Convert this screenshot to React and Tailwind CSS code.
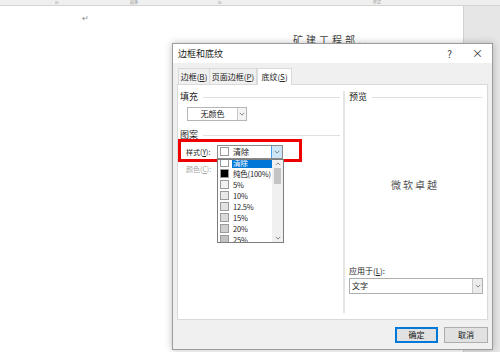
import React from "react";

const font = { fontFamily: '"Noto Sans CJK SC", "Noto Sans", sans-serif' };

const patterns = [
  { label: "清除", swatch: "bg-white", active: true },
  { label: "纯色(100%)", swatch: "bg-black" },
  { label: "5%", swatch: "bg-[#f2f2f2]" },
  { label: "10%", swatch: "bg-[#e8e8e8]" },
  { label: "12.5%", swatch: "bg-[#e2e2e2]" },
  { label: "15%", swatch: "bg-[#dadada]" },
  { label: "20%", swatch: "bg-[#cfcfcf]" },
  { label: "25%", swatch: "bg-[#c2c2c2]" },
];

function Chevron({ up = false, className = "" }) {
  return (
    <svg viewBox="0 0 8 5" className={className} fill="none">
      <path
        d={up ? "M1 4L4 1L7 4" : "M1 1L4 4L7 1"}
        stroke="#606060"
        strokeWidth="1"
      />
    </svg>
  );
}

function GroupHeading({ children }) {
  return (
    <div className="flex items-center h-[12px]">
      <span className="text-[9px] leading-[12px] text-[#1a1a1a]">{children}</span>
      <div className="flex-1 h-px bg-[#e0e0e0] ml-[5px] mr-[3px]" />
    </div>
  );
}

export default function App() {
  return (
    <div className="relative w-[500px] h-[352px] overflow-hidden bg-white" style={font}>
      {/* 标尺 */}
      <div className="flex items-center h-[6px] bg-[#efefef] border-b border-[#d4d4d4] overflow-hidden">
        <span className="ml-[55px] text-[4px] leading-[5px] text-[#888]">⊡</span>
        <span className="ml-[72px] text-[4px] leading-[5px] text-[#999]">段落</span>
        <span className="ml-[80px] text-[4px] leading-[5px] text-[#888]">⊡</span>
        <span className="ml-[152px] text-[4px] leading-[5px] text-[#999]">样式</span>
      </div>

      {/* 文档区 */}
      <div className="flex h-[346px]">
        <div className="w-[463px]">
          <div className="pl-[82px] pt-[7px] text-[8px] leading-[10px] text-[#888]">↵</div>
          <div className="pl-[293px] pt-[11px] text-[10px] leading-[12px] tracking-[3px] text-[#444]">
            矿建工程部..
          </div>
        </div>
        <div className="flex-1 bg-[#e6e6e6] border-l border-[#d2d2d2]" />
      </div>

      {/* 对话框 */}
      <div className="absolute left-[172px] top-[43px] w-[321px] h-[307px] flex flex-col bg-[#f0f0f0] border border-[#9c9c9c] shadow-[0_0_7px_rgba(0,0,0,0.25)]">
        <div className="h-[19px] bg-white flex items-center pl-[5px] pr-[9px]">
          <span className="text-[9px] text-[#1a1a1a]">边框和底纹</span>
          <span className="ml-auto text-[10px] text-[#333] mr-[20px]">?</span>
          <span className="text-[11px] text-[#333] leading-none">×</span>
        </div>

        {/* 选项卡 */}
        <div className="flex items-end mt-[4px] ml-[5px] h-[17px]">
          <div className="w-[32px] h-[16px] flex items-center justify-center border border-b-0 border-[#dadada] bg-[#f0f0f0] text-[8px] text-[#222] whitespace-nowrap">
            <span>边框(<u>B</u>)</span>
          </div>
          <div className="w-[47px] h-[16px] flex items-center justify-center border border-b-0 border-l-0 border-[#dadada] bg-[#f0f0f0] text-[8px] text-[#222] whitespace-nowrap">
            <span>页面边框(<u>P</u>)</span>
          </div>
          <div className="w-[35px] h-[17px] flex items-center justify-center border border-b-0 border-[#dadada] bg-white text-[8px] text-[#222] -mb-px relative z-10 whitespace-nowrap">
            <span>底纹(<u>S</u>)</span>
          </div>
        </div>

        {/* 面板 */}
        <div className="ml-[4px] w-[311px] h-[236px] bg-white border border-[#dadada] flex">
          <div className="w-[165px] pl-[2px] pt-[6px]">
            <GroupHeading>填充</GroupHeading>
            <div className="mt-[4px] ml-[7px] w-[60px] h-[14px] flex border border-[#b5b5b5]">
              <div className="flex-1 flex items-center justify-center text-[8px] text-[#222]">无颜色</div>
              <div className="w-[9px] border-l border-[#c8c8c8] bg-[#f4f4f4] flex items-center justify-center">
                <Chevron className="w-[6px] h-[4px]" />
              </div>
            </div>

            <div className="mt-[8px]">
              <GroupHeading>图案</GroupHeading>
            </div>
            <div className="mt-[4px] ml-[6px] flex items-center h-[14px]">
              <span className="w-[31px] text-[7px] text-[#222] whitespace-nowrap">
                样式(<u>Y</u>):
              </span>
              <div className="w-[66px] h-[14px] flex border border-[#8a8a8a] bg-white">
                <div className="w-[9px] h-[9px] ml-[2px] mt-[1px] border border-[#9a9a9a] bg-white" />
                <span className="ml-[4px] text-[8px] leading-[12px] text-[#222]">清除</span>
                <div className="ml-auto w-[11px] bg-[#cde6f7] border-l border-[#4d9be0] flex items-center justify-center">
                  <Chevron className="w-[6px] h-[4px]" />
                </div>
              </div>
            </div>
            <div className="mt-[4px] ml-[6px] text-[7px] leading-[12px] text-[#a3a3a3] whitespace-nowrap">
              颜色(<u>C</u>):
            </div>
          </div>

          <div className="flex-1 flex flex-col my-[6px] mr-[2px] border-l-2 border-[#e4e4e4] pl-[4px]">
            <GroupHeading>预览</GroupHeading>
            <div className="h-[162px] flex items-center justify-center pr-[4px]">
              <span className="text-[10px] tracking-[2px] text-[#555]" style={{ fontFamily: '"Noto Sans CJK SC", serif' }}>
                微软卓越
              </span>
            </div>
            <div className="h-[12px] text-[8px] leading-[12px] text-[#222] whitespace-nowrap">
              应用于(<u>L</u>):
            </div>
            <div className="mt-[1px] w-[134px] h-[16px] flex border border-[#b0b0b0]">
              <span className="ml-[2px] text-[8px] leading-[14px] text-[#222]">文字</span>
              <div className="ml-auto w-[10px] bg-[#ececec] border-l border-[#c8c8c8] flex items-center justify-center">
                <Chevron className="w-[6px] h-[4px]" />
              </div>
            </div>
          </div>
        </div>

        {/* 按钮 */}
        <div className="mt-[7px] flex justify-end gap-[6px] pr-[4px]">
          <button className="w-[43px] h-[16px] bg-[#e1e1e1] border-2 border-[#0078d7] text-[8px] text-[#111] flex items-center justify-center">
            确定
          </button>
          <button className="w-[44px] h-[16px] bg-[#e1e1e1] border border-[#adadad] text-[8px] text-[#111] flex items-center justify-center">
            取消
          </button>
        </div>
      </div>

      {/* 红色标注框 */}
      <div className="absolute left-[178px] top-[139px] w-[124px] h-[23px] border-[3px] border-[#ee0000] pointer-events-none" />

      {/* 下拉列表 */}
      <div className="absolute left-[217px] top-[159px] w-[67px] h-[84px] flex bg-white border border-[#7d7d7d] z-20">
        <div className="flex-1 overflow-hidden">
          <div className="-mt-[3px]">
            {patterns.map((p) => (
              <div key={p.label} className="h-[11px] flex items-center">
                <div className={`w-[9px] h-[9px] ml-[2px] shrink-0 border border-[#9a9a9a] ${p.swatch}`} />
                <div
                  className={`ml-[3px] flex-1 h-[11px] pl-[1px] text-[7.5px] leading-[11px] whitespace-nowrap tracking-[-0.2px] ${
                    p.active ? "bg-[#0078d7] text-white" : "text-[#222]"
                  }`}
                >
                  {p.label}
                </div>
              </div>
            ))}
          </div>
        </div>
        <div className="w-[11px] shrink-0 bg-[#f0f0f0] flex flex-col items-center">
          <Chevron up className="w-[6px] h-[4px] mt-[2px]" />
          <div className="w-[7px] h-[16px] bg-[#c4c4c4] mt-[2px]" />
          <Chevron className="w-[6px] h-[4px] mt-auto mb-[2px]" />
        </div>
      </div>
    </div>
  );
}
